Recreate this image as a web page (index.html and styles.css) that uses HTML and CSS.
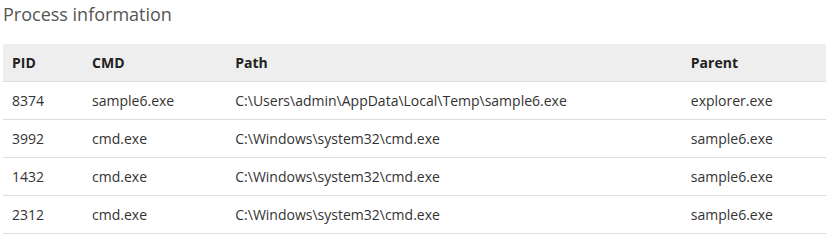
FILE: index.html
```html
<!DOCTYPE html>
<html>
<head>
<meta charset="utf-8">
<link rel="stylesheet" href="styles.css">
</head>
<body>
<div class="panel">
  <h3 class="title">Process information</h3>
  <table class="proc">
    <thead>
      <tr><th class="c-pid">PID</th><th class="c-cmd">CMD</th><th class="c-path">Path</th><th class="c-parent">Parent</th></tr>
    </thead>
    <tbody>
      <tr><td>8374</td><td>sample6.exe</td><td>C:\Users\admin\AppData\Local\Temp\sample6.exe</td><td>explorer.exe</td></tr>
      <tr><td>3992</td><td>cmd.exe</td><td>C:\Windows\system32\cmd.exe</td><td>sample6.exe</td></tr>
      <tr><td>1432</td><td>cmd.exe</td><td>C:\Windows\system32\cmd.exe</td><td>sample6.exe</td></tr>
      <tr><td>2312</td><td>cmd.exe</td><td>C:\Windows\system32\cmd.exe</td><td>sample6.exe</td></tr>
    </tbody>
  </table>
</div>
</body>
</html>
```
FILE: styles.css
```css
html, body { margin: 0; padding: 0; background: #fff; }
body { font-family: "Open Sans", "DejaVu Sans", sans-serif; color: #333; }
.panel { padding: 0 7px 0 3px; }
.title {
  margin: 0;
  font-size: 18px;
  font-weight: 400;
  color: #555;
  line-height: 28px;
  height: 28px;
}
.proc {
  margin-top: 16px;
  width: 823px;
  border-collapse: collapse;
  font-size: 14px;
  table-layout: fixed;
}
.proc th, .proc td {
  text-align: left;
  padding: 0 9px;
  height: 37px;
  border-bottom: 1px solid #ddd;
  white-space: nowrap;
}
.proc th { font-weight: 700; background: #eee; color: #222; }
.proc td { color: #333; }
.c-pid { width: 62px; }
.c-cmd { width: 125px; }
.c-path { width: 437px; }
.c-parent { width: 126px; }
```
